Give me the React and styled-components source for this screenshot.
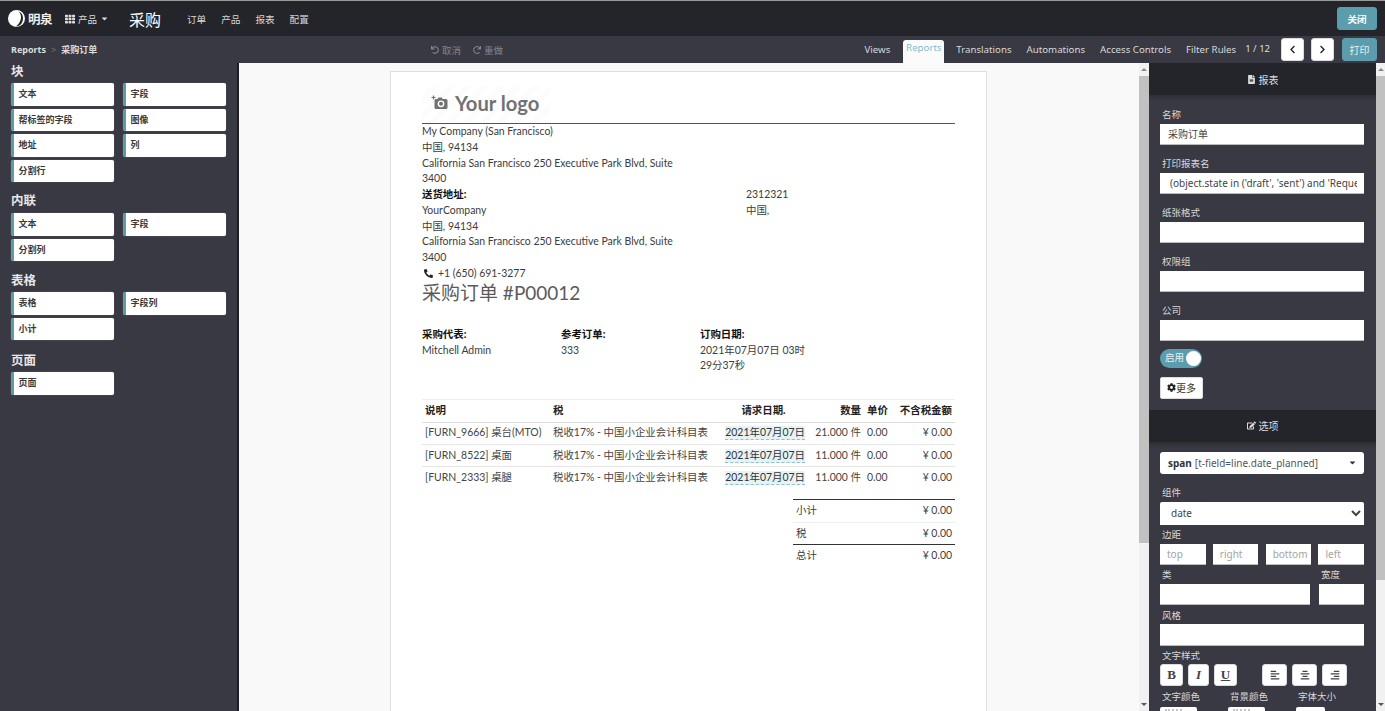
import React from "react";
import styled, { createGlobalStyle } from "styled-components";
import {
  FaTh, FaCaretDown, FaUndo, FaRedo, FaChevronLeft, FaChevronRight, FaFileAlt, FaEdit, FaCog,
  FaAlignLeft, FaAlignCenter, FaAlignRight, FaPhone,
} from "react-icons/fa";

const UI = `"Noto Sans", "Noto Sans CJK SC", sans-serif`;
const DOC = `Lato, "Noto Sans CJK SC", sans-serif`;

const Global = createGlobalStyle`
  html, body { margin: 0; padding: 0; height: 100%; overflow: hidden; }
  body { font-family: ${UI}; background: #383943; }
  * { box-sizing: border-box; }
`;

const Shell = styled.div`
  width: 1385px; height: 711px; overflow: hidden; display: flex; flex-direction: column;
  background: #383943; border-top: 1px solid #9a9a9a;
`;
const TopBar = styled.header`
  height: 35px; flex: none; background: #24252b; display: flex; align-items: center;
  padding: 0 8px 0 8px; color: #e4e4e4;
`;
const Brand = styled.div`
  display: flex; align-items: center; gap: 3px; width: 57px; font-size: 12.5px; font-weight: 700; color: #eee; letter-spacing: -0.5px;
`;
const AppsMenu = styled.div`
  display: flex; align-items: center; gap: 3px; width: 64px; font-size: 9.5px; color: #ddd;
`;
const AppTitle = styled.div`
  font-size: 16px; color: #fff; width: 58px; font-weight: 400;
`;
const NavLink = styled.span`
  font-size: 9.6px; color: #d6d6d6; margin-right: 15px;
`;
const CloseBtn = styled.button`
  margin-left: auto; width: 40px; height: 23px; border: 1px solid #5b9dac; border-radius: 3px; background: #5b9dac;
  color: #fff; font: 700 9.5px ${UI}; padding: 0;
`;
const SubBar = styled.div`
  height: 27px; flex: none; display: flex; align-items: center; background: #383943; padding-left: 11px;
  position: relative; z-index: 2;
`;
const Crumbs = styled.div`
  width: 420px; display: flex; align-items: center; gap: 5px; font-size: 9px; font-weight: 700; color: #dcdcdc;
`;
const Sep = styled.span` color: #777; font-weight: 400; `;
const History = styled.div`
  display: flex; gap: 12px; font-size: 9.5px; color: #85858b;
`;
const HistoryItem = styled.span`
  display: flex; align-items: center; gap: 3px;
  svg { font-size: 8px; }
`;
const Tabs = styled.nav`
  margin-left: auto; display: flex; align-items: center; height: 100%; font-size: 9.7px; color: #d8d8d8;
`;
const Tab = styled.span`
  margin-right: ${p => p.$gap}px; white-space: nowrap;
`;
const ActiveTab = styled.span`
  margin: 4px 12px -4px 0; height: 27px; width: 41px; border-radius: 3px 3px 0 0; background: #fbfbfb; color: #86bccb;
  display: flex; justify-content: center; padding-top: 1px; font-size: 9.7px; position: relative; z-index: 3;
`;
const Pager = styled.span`
  margin-right: 11px; font-size: 9.5px; color: #dedede; margin-bottom: 2px;
`;
const NavBtn = styled.button`
  width: 23px; height: 23px; border: 1px solid #ddd; border-radius: 3px; background: #fff; margin-right: 7px; padding: 0;
  display: flex; align-items: center; justify-content: center; color: #24252b; font-size: 9px;
`;
const PrintBtn = styled.button`
  width: 35px; height: 23px; border: 1px solid #5b9dac; border-radius: 3px; background: #5b9dac; color: #e8f2f4; font: 10px ${UI};
  padding: 0; margin-right: 8px; margin-left: 1px;
`;
const Body = styled.div`
  flex: 1; display: flex; min-height: 0;
`;
const Blocks = styled.aside`
  width: 239px; flex: none; background: #383943; border-right: 2px solid #1e1e22; padding: 1px 0 0 11px;
`;
const BlockTitle = styled.h3`
  margin: 0; height: ${p => p.$h}px; line-height: 15px; font-size: 12.5px; font-weight: 700; color: #e6e6e6;
`;
const BlockGrid = styled.div`
  display: grid; grid-template-columns: 103px 103px; column-gap: 9px; row-gap: 3px; margin-bottom: ${p => p.$mb}px;
`;
const BlockItem = styled.div`
  height: 22.5px; background: #fff; border-left: 3px solid #5b9dac; border-radius: 2px; padding-left: 4.5px;
  font-size: 9px; font-weight: 700; line-height: 22px; color: #3a3a3a; box-shadow: 0 0 1px #999;
`;
const Canvas = styled.main`
  flex: 1; background: #f9f9f9; padding: 8px 0 0 151px; overflow: hidden; min-width: 0;
`;
const Scroll = styled.div`
  width: ${p => p.$w}px; flex: none; background: #f1f1f1; display: flex; flex-direction: column; align-items: stretch;
  overflow: hidden; height: 100%;
`;
const ScrollArrow = styled.div`
  height: 13px; flex: none; display: flex; align-items: center; justify-content: center;
  &::before { content: ""; border: 3px solid transparent; ${p => p.$up ? "border-bottom: 3px solid #888; margin-top: -3px;" : "border-top: 3px solid #555; margin-top: 3px;"} }
`;
const ScrollThumb = styled.div`
  height: ${p => p.$h}px; flex: none; background: #c1c1c1;
`;
const ScrollSpace = styled.div` flex: 1; `;

const Page = styled.article`
  width: 597px; height: 700px; background: #fff; border: 1px solid #dedede; padding: 14px 31px 0 31px;
  font-family: ${DOC}; font-size: 10.45px; color: #3c3c3c; line-height: 15.78px;
`;
const LogoBox = styled.div`
  width: 128px; height: 37px; display: flex; align-items: center; gap: 7px; padding: 0 0 4px 9px; color: #727272;
  background: repeating-linear-gradient(135deg, #fff 0 6px, #fcfcfc 6px 12px);
  font: 700 20.2px Lato, sans-serif;
`;
const LogoRule = styled.hr`
  border: 0; height: 1px; background: #555; margin: 0;
`;
const AddressRow = styled.div`
  display: flex;
`;
const AddressCol = styled.div`
  width: ${p => p.$w}px; flex: none;
`;
const Strong = styled.strong` color: #111; font-weight: 700; `;
const PhoneLine = styled.div`
  display: flex; align-items: center; gap: 5px; padding-left: 2px;
  svg { font-size: 9px; color: #222; transform: scaleX(-1); }
`;
const DocTitle = styled.h2`
  margin: 0; font-size: 19px; line-height: 21px; font-weight: 400; color: #5b5b5b;
`;
const Infos = styled.div`
  display: grid; grid-template-columns: 139px 139px 110px; margin-top: 24px;
`;
const Lines = styled.table`
  width: 533px; table-layout: fixed; border-collapse: collapse; margin-top: 25px; border-top: 1px solid #eee;
`;
const Col = styled.col` width: ${p => p.$w}px; `;
const Th = styled.th`
  height: 22.5px; padding: 0 3px; text-align: ${p => p.$a || "left"}; font-weight: 700; color: #222; white-space: nowrap; border-bottom: 1px solid #ddd;
`;
const Td = styled.td`
  height: 22.4px; padding: 0 3px; text-align: ${p => p.$a || "left"}; white-space: nowrap; border-bottom: 1px solid #e6e6e6; color: #444;
`;
const LastTd = styled(Td)` border-bottom: 0; `;
const DateMark = styled.span`
  background: #e6f2f5; border-bottom: 1px dashed #8cc0cc; color: #333; padding-bottom: 1px;
`;
const TotalsWrap = styled.div`
  display: flex; justify-content: flex-end; margin-top: 10px;
`;
const Totals = styled.div`
  width: 162px; border-top: 1px solid #333;
`;
const TotalRow = styled.div`
  height: 22.5px; display: flex; align-items: center; justify-content: space-between; padding: 0 3px;
  border-bottom: 1px solid ${p => p.$dark ? "#333" : p.$none ? "transparent" : "#eee"};
`;

const Props = styled.aside`
  width: 227px; flex: none; background: #383943; overflow: hidden; display: flex; flex-direction: column;
`;
const PanelHead = styled.div`
  height: 32px; flex: none; background: #24252b; color: #dcdcdc; font-size: 10px; display: flex; align-items: center; justify-content: center; gap: 3px;
  svg { font-size: 9px; }
`;
const Section = styled.div`
  padding: ${p => p.$pt}px 12px 0 11px; background: linear-gradient(#2d2e35, #383943 6px); background-repeat: no-repeat;
`;
const Label = styled.label`
  display: block; height: 15.5px; line-height: 13px; font-size: 9.5px; color: #d8d8d8; padding-left: 2px;
`;
const Field = styled.input`
  display: block; width: 100%; height: 21.5px; background: #fff; margin: 0 0 ${p => p.$mb ?? 12}px; font: 10px ${UI}; color: #444;
  padding: 0 7px 0 ${p => p.$pl ?? 8}px; border: 0; border-bottom: 1px solid #bbb; outline: 0;
`;
const Toggle = styled.div`
  width: 42px; height: 19px; border-radius: 10px; background: #5b9dac; color: #e6f2f4; font-size: 9.5px; line-height: 18px; padding: 0 1px 0 5px;
  display: flex; justify-content: space-between; align-items: center; margin-bottom: 9px;
`;
const Knob = styled.span`
  width: 15px; height: 15px; background: #fff; border-radius: 50%;
`;
const MoreBtn = styled.button`
  width: 43px; height: 22px; background: #fff; border: 1px solid #ddd; border-radius: 2px; padding: 0; font: 10px ${UI}; color: #333;
  display: flex; align-items: center; justify-content: center; margin-bottom: 11px;
  svg { font-size: 9px; color: #222; }
`;
const SelectBox = styled.div`
  height: 22px; background: #fff; border-radius: 3px; display: flex; align-items: center; padding: 0 7px 0 8px; font-size: 10px; color: #555; margin-bottom: 12.5px;
  b { color: #333; margin-right: 3px; }
  svg { margin-left: auto; font-size: 9px; color: #333; }
`;
const NativeSelect = styled.select`
  display: block; width: 100%; height: 23px; background: #fff; border: 0; padding: 0 0 0 7px; font: 10px ${UI}; color: #444; margin-bottom: 3.5px; border-radius: 2px 2px 0 0; outline: 0;
`;
const Quad = styled.div`
  display: grid; grid-template-columns: repeat(4, 45.5px); justify-content: space-between; margin-bottom: 3px;
`;
const SmallInput = styled.input`
  display: block; width: 100%; height: 21.5px; background: #fff; font: 10px ${UI}; padding: 0 2px 0 7px; border: 0; border-bottom: 1px solid #bbb; outline: 0;
  &::placeholder { color: #a4a4a4; opacity: 1; }
`;
const Two = styled.div`
  display: grid; grid-template-columns: 150px 45px; column-gap: 9px; margin-bottom: ${p => p.$mb}px;
`;
const StyleBar = styled.div`
  display: flex; height: 22px; margin-bottom: 3.5px;
`;
const StyleBtn = styled.button`
  width: ${p => p.$w}px; height: 22px; margin-right: ${p => p.$mr}px; background: #fff; border: 1px solid #ddd; border-radius: 3px; padding: 0;
  display: flex; align-items: center; justify-content: center; color: #444; font-size: 10px;
`;
const GlyphBtn = styled(StyleBtn)`
  font: ${p => p.$italic ? "italic " : ""}700 13px "Liberation Serif", serif; text-decoration: ${p => p.$under ? "underline" : "none"};
`;
const ThreeCols = styled.div`
  display: grid; grid-template-columns: 68px 68px 50px; font-size: 9.5px; color: #d8d8d8; line-height: 13px;
`;
const ColLabel = styled.div` padding-left: 2px; `;
const Swatch = styled.div`
  height: 20px; width: ${p => p.$w}px; background: #fff; border-radius: 2px; margin-top: 4px; padding: 2px 0 0 5px;
  &::before { content: ""; display: ${p => p.$dots ? "block" : "none"}; width: 17px; border-top: 2px dotted #c4c4c4; }
`;

const Logo = () => (
  <svg width="17" height="17" viewBox="0 0 17 17">
    <circle cx="8.5" cy="8.5" r="8.5" fill="#fff" />
    <path d="M10.5 1.5C14 4 14.5 11 8 16.5C12.5 16.5 15 12.5 15 8C15 5 13.5 2.5 10.5 1.5Z" fill="#24252b" />
  </svg>
);
const CameraPlus = () => (
  <svg width="17" height="15" viewBox="0 0 17 15">
    <path d="M1 0.5v4M-1 2.5h4" stroke="#727272" strokeWidth="1.2" transform="translate(1.5 0)" />
    <path d="M5 4h1.5l1-1.6h3.2l1 1.6H15a1.5 1.5 0 0 1 1.5 1.5v7A1.5 1.5 0 0 1 15 14H5a1.5 1.5 0 0 1-1.5-1.5v-7A1.5 1.5 0 0 1 5 4Z" fill="#727272" />
    <circle cx="10" cy="8.8" r="3.4" fill="#fff" />
    <circle cx="10" cy="8.8" r="2" fill="#727272" />
  </svg>
);

const rows = [
  ["[FURN_9666] 桌台(MTO)", "21.000 件"],
  ["[FURN_8522] 桌面", "11.000 件"],
  ["[FURN_2333] 桌腿", "11.000 件"],
];

export default function App() {
  return (
    <Shell>
      <Global />
      <TopBar>
        <Brand><Logo />明泉</Brand>
        <AppsMenu><FaTh size={10} />产品<FaCaretDown size={9} /></AppsMenu>
        <AppTitle>采购</AppTitle>
        <NavLink>订单</NavLink><NavLink>产品</NavLink><NavLink>报表</NavLink><NavLink>配置</NavLink>
        <CloseBtn>关闭</CloseBtn>
      </TopBar>
      <SubBar>
        <Crumbs><span>Reports</span><Sep>&gt;</Sep><span>采购订单</span></Crumbs>
        <History>
          <HistoryItem><FaUndo />取消</HistoryItem>
          <HistoryItem><FaRedo />重做</HistoryItem>
        </History>
        <Tabs>
          <Tab $gap={13}>Views</Tab>
          <ActiveTab>Reports</ActiveTab>
          <Tab $gap={15}>Translations</Tab>
          <Tab $gap={15}>Automations</Tab>
          <Tab $gap={15}>Access Controls</Tab>
          <Tab $gap={9}>Filter Rules</Tab>
          <Pager>1 / 12</Pager>
          <NavBtn><FaChevronLeft /></NavBtn>
          <NavBtn><FaChevronRight /></NavBtn>
          <PrintBtn>打印</PrintBtn>
        </Tabs>
      </SubBar>
      <Body>
        <Blocks>
          <BlockTitle $h={19}>块</BlockTitle>
          <BlockGrid $mb={11}>
            <BlockItem>文本</BlockItem><BlockItem>字段</BlockItem>
            <BlockItem>帮标签的字段</BlockItem><BlockItem>图像</BlockItem>
            <BlockItem>地址</BlockItem><BlockItem>列</BlockItem>
            <BlockItem>分割行</BlockItem>
          </BlockGrid>
          <BlockTitle $h={20}>内联</BlockTitle>
          <BlockGrid $mb={12}>
            <BlockItem>文本</BlockItem><BlockItem>字段</BlockItem>
            <BlockItem>分割列</BlockItem>
          </BlockGrid>
          <BlockTitle $h={19}>表格</BlockTitle>
          <BlockGrid $mb={13}>
            <BlockItem>表格</BlockItem><BlockItem>字段列</BlockItem>
            <BlockItem>小计</BlockItem>
          </BlockGrid>
          <BlockTitle $h={19}>页面</BlockTitle>
          <BlockGrid $mb={0}>
            <BlockItem>页面</BlockItem>
          </BlockGrid>
        </Blocks>
        <Canvas>
          <Page>
            <LogoBox><CameraPlus />Your logo</LogoBox>
            <LogoRule />
            <AddressCol $w={270}>
              My Company (San Francisco)<br />中国, 94134<br />California San Francisco 250 Executive Park Blvd, Suite 3400
            </AddressCol>
            <AddressRow>
              <AddressCol $w={324}>
                <Strong>送货地址:</Strong><br />YourCompany<br />中国, 94134<br />
                <AddressCol $w={270}>California San Francisco 250 Executive Park Blvd, Suite 3400</AddressCol>
                <PhoneLine><FaPhone />+1 (650) 691-3277</PhoneLine>
              </AddressCol>
              <AddressCol $w={120}>2312321<br />中国,</AddressCol>
            </AddressRow>
            <DocTitle>采购订单 #P00012</DocTitle>
            <Infos>
              <div><Strong>采购代表:</Strong><br />Mitchell Admin</div>
              <div><Strong>参考订单:</Strong><br />333</div>
              <div><Strong>订购日期:</Strong><br />2021年07月07日 03时29分37秒</div>
            </Infos>
            <Lines>
              <colgroup>
                <Col $w={128} /><Col $w={169} /><Col $w={89} /><Col $w={56} /><Col $w={28} /><Col $w={63} />
              </colgroup>
              <thead>
                <tr>
                  <Th>说明</Th><Th>税</Th><Th $a="center">请求日期.</Th>
                  <Th $a="right">数量</Th><Th>单价</Th><Th $a="right">不含税金额</Th>
                </tr>
              </thead>
              <tbody>
                {rows.map(([name, qty], i) => {
                  const Cell = i === rows.length - 1 ? LastTd : Td;
                  return (
                    <tr key={name}>
                      <Cell>{name}</Cell>
                      <Cell>税收17% - 中国小企业会计科目表</Cell>
                      <Cell $a="right"><DateMark>2021年07月07日</DateMark></Cell>
                      <Cell $a="right">{qty}</Cell>
                      <Cell>0.00</Cell>
                      <Cell $a="right">¥ 0.00</Cell>
                    </tr>
                  );
                })}
              </tbody>
            </Lines>
            <TotalsWrap>
              <Totals>
                <TotalRow><span>小计</span><span>¥ 0.00</span></TotalRow>
                <TotalRow $dark><span>税</span><span>¥ 0.00</span></TotalRow>
                <TotalRow $none><span>总计</span><span>¥ 0.00</span></TotalRow>
              </Totals>
            </TotalsWrap>
          </Page>
        </Canvas>
        <Scroll $w={10}>
          <ScrollArrow $up /><ScrollThumb $h={467} /><ScrollSpace /><ScrollArrow />
        </Scroll>
        <Props>
          <PanelHead><FaFileAlt />报表</PanelHead>
          <Section $pt={13}>
            <Label>名称</Label>
            <Field readOnly value="采购订单" />
            <Label>打印报表名</Label>
            <Field readOnly $pl={10} value="(object.state in ('draft', 'sent') and 'Request for Quotation')" />
            <Label>纸张格式</Label>
            <Field readOnly />
            <Label>权限组</Label>
            <Field readOnly />
            <Label>公司</Label>
            <Field readOnly $mb={7.5} />
            <Toggle>启用<Knob /></Toggle>
            <MoreBtn><FaCog />更多</MoreBtn>
          </Section>
          <PanelHead><FaEdit />选项</PanelHead>
          <Section $pt={10}>
            <SelectBox><b>span</b>[t-field=line.date_planned]<FaCaretDown /></SelectBox>
            <Label>组件</Label>
            <NativeSelect defaultValue="date"><option value="date">date</option></NativeSelect>
            <Label>边距</Label>
            <Quad>
              <SmallInput readOnly placeholder="top" /><SmallInput readOnly placeholder="right" />
              <SmallInput readOnly placeholder="bottom" /><SmallInput readOnly placeholder="left" />
            </Quad>
            <Two $mb={0}><Label>类</Label><Label>宽度</Label></Two>
            <Two $mb={3.5}><Field readOnly $mb={0} /><Field readOnly $mb={0} /></Two>
            <Label>风格</Label>
            <Field readOnly $mb={3} />
            <Label>文字样式</Label>
            <StyleBar>
              <GlyphBtn $w={23} $mr={5}>B</GlyphBtn>
              <GlyphBtn $w={21} $mr={5} $italic>I</GlyphBtn>
              <GlyphBtn $w={23} $mr={25} $under>U</GlyphBtn>
              <StyleBtn $w={25} $mr={5}><FaAlignLeft /></StyleBtn>
              <StyleBtn $w={25} $mr={5}><FaAlignCenter /></StyleBtn>
              <StyleBtn $w={25} $mr={0}><FaAlignRight /></StyleBtn>
            </StyleBar>
            <ThreeCols>
              <div><ColLabel>文字颜色</ColLabel><Swatch $w={37} $dots /></div>
              <div><ColLabel>背景颜色</ColLabel><Swatch $w={37} $dots /></div>
              <div><ColLabel>字体大小</ColLabel><Swatch $w={29} /></div>
            </ThreeCols>
          </Section>
        </Props>
        <Scroll $w={9}>
          <ScrollArrow $up /><ScrollThumb $h={504} /><ScrollSpace /><ScrollArrow />
        </Scroll>
      </Body>
    </Shell>
  );
}
